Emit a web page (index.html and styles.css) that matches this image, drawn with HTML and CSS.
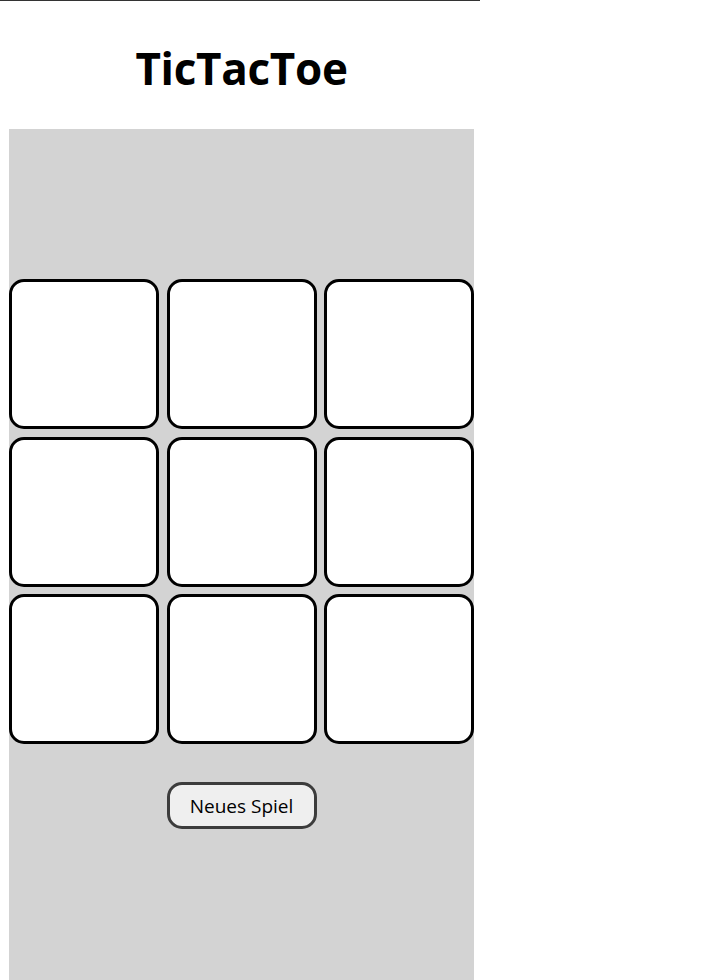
FILE: index.html
```html
<!DOCTYPE html>
<html>
<head>
<meta charset="utf-8">
<link rel="stylesheet" href="styles.css">
</head>
<body>
<div class="topline"></div>
<div class="page">
  <header class="head"><h1 class="title">TicTacToe</h1></header>
  <main class="board-area">
    <div class="board">
      <div class="cell"></div><div class="cell"></div><div class="cell"></div>
      <div class="cell"></div><div class="cell"></div><div class="cell"></div>
      <div class="cell"></div><div class="cell"></div><div class="cell"></div>
    </div>
    <button class="new-game">Neues Spiel</button>
  </main>
</div>
</body>
</html>
```
FILE: styles.css
```css
html, body {
  margin: 0;
  padding: 0;
  background: #fff;
  font-family: "Open Sans", "DejaVu Sans", sans-serif;
}
.topline {
  width: 480px;
  height: 1px;
  background: #333;
}
.page {
  margin-left: 9px;
  width: 465px;
}
.head {
  height: 128px;
  display: flex;
  align-items: center;
  justify-content: center;
  padding-top: 6px;
  box-sizing: border-box;
}
.title {
  margin: 0;
  font-size: 44px;
  font-weight: 700;
  color: #000;
  line-height: 1;
  letter-spacing: -0.3px;
}
.board-area {
  background: #d3d3d3;
  height: 860px;
  padding-top: 150px;
  box-sizing: border-box;
  display: flex;
  flex-direction: column;
  align-items: center;
}
.board {
  display: grid;
  grid-template-columns: repeat(3, 1fr);
  grid-auto-rows: 150px;
  gap: 7.5px;
  width: 465px;
}
.cell {
  box-sizing: border-box;
  background: #fff;
  border: 3px solid #000;
  border-radius: 15px;
}
.new-game {
  margin-top: 38px;
  width: 150px;
  height: 47px;
  box-sizing: border-box;
  background: #efefef;
  border: 3px solid #3c3c3c;
  border-radius: 15px;
  font-family: "Open Sans", sans-serif;
  font-size: 19px;
  color: #000;
  padding: 0;
}
```
